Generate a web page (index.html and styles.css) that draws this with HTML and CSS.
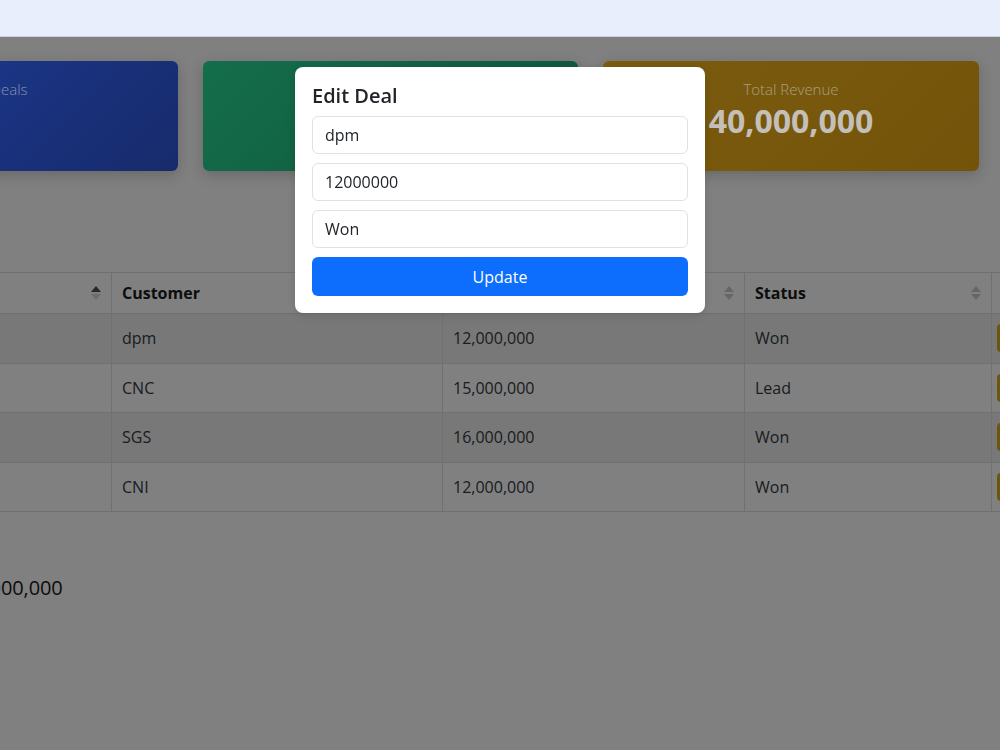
FILE: index.html
```html
<!DOCTYPE html>
<html>
  <head>
    <title>Deals Dashboard</title>
    <link rel="stylesheet" href="styles.css">
  </head>
  <body>
    <header class="topbar"></header>

    <main class="page">
      <section class="stats">
        <div class="stat stat-blue">
          <p class="stat-label">Total Deals</p>
          <p class="stat-value">4</p>
        </div>
        <div class="stat stat-green">
          <p class="stat-label">Won Deals</p>
          <p class="stat-value">3</p>
        </div>
        <div class="stat stat-gold">
          <p class="stat-label">Total Revenue</p>
          <p class="stat-value">40,000,000</p>
        </div>
      </section>

      <table class="deals">
        <colgroup>
          <col class="col-id">
          <col class="col-customer">
          <col class="col-value">
          <col class="col-status">
          <col class="col-actions">
        </colgroup>
        <thead>
          <tr>
            <th class="sortable asc">ID</th>
            <th class="sortable">Customer</th>
            <th class="sortable">Value</th>
            <th class="sortable">Status</th>
            <th>Actions</th>
          </tr>
        </thead>
        <tbody>
          <tr>
            <td>1</td>
            <td>dpm</td>
            <td>12,000,000</td>
            <td>Won</td>
            <td class="actions"><button class="btn-edit">Edit</button></td>
          </tr>
          <tr>
            <td>2</td>
            <td>CNC</td>
            <td>15,000,000</td>
            <td>Lead</td>
            <td class="actions"><button class="btn-edit">Edit</button></td>
          </tr>
          <tr>
            <td>3</td>
            <td>SGS</td>
            <td>16,000,000</td>
            <td>Won</td>
            <td class="actions"><button class="btn-edit">Edit</button></td>
          </tr>
          <tr>
            <td>4</td>
            <td>CNI</td>
            <td>12,000,000</td>
            <td>Won</td>
            <td class="actions"><button class="btn-edit">Edit</button></td>
          </tr>
        </tbody>
      </table>

      <h4 class="summary">Total Deal Value: 55,000,000</h4>
    </main>

    <div class="backdrop"></div>

    <div class="modal-wrap">
      <form class="modal">
        <h5 class="modal-title">Edit Deal</h5>
        <input class="field" type="text" value="dpm" autofocus>
        <input class="field" type="text" value="12000000">
        <input class="field" type="text" value="Won">
        <button type="button" class="btn-primary">Update</button>
      </form>
    </div>
  </body>
</html>
```

FILE: styles.css
```css
:root {
  --page: #a0a0a0;
  --line: #8c8c8c;
  --stripe: #969696;
  --text: #212529;
  --primary: #0d6efd;
  --input-border: #dee2e6;
  --radius: 6px;
}

* {
  box-sizing: border-box;
}

html,
body {
  margin: 0;
  height: 100%;
  overflow: hidden;
}

body {
  font-family: "Segoe UI", "Open Sans", sans-serif;
  font-size: 16px;
  line-height: 1.5;
  color: var(--text);
  background-color: var(--page);
}

.topbar {
  position: relative;
  z-index: 20;
  height: 37px;
  background-color: #e8eefb;
  border-bottom: 1px solid #cfd2dc;
}

/* page is wider than the window, scrolled to the right */
.page {
  width: 1340px;
  margin-left: -197px;
  padding-top: 24px;
}

.stats {
  display: grid;
  grid-template-columns: 375px 375px 376px;
  column-gap: 25px;
}

.stat {
  height: 110px;
  padding: 16px 20px;
  border-radius: var(--radius);
  text-align: center;
  box-shadow: 0 4px 14px rgba(0, 0, 0, 0.18);
}

.stat p {
  margin: 0;
}

.stat-label {
  font-size: 15px;
  font-weight: 300;
  line-height: 24px;
  color: rgba(255, 255, 255, 0.6);
}

.stat-value {
  margin-top: 12px;
  font-size: 32px;
  font-weight: 700;
  line-height: 40px;
  color: rgba(255, 255, 255, 0.92);
}

.stat-blue {
  background: linear-gradient(135deg, #264bbc, #1d3687);
}

.stat-green {
  background: linear-gradient(135deg, #198a5e, #136a4b);
}

.stat-gold {
  background: linear-gradient(135deg, #9c7313, #8f690c);
}

.deals {
  margin-top: 101px;
  width: 1318px;
  table-layout: fixed;
  border-collapse: collapse;
  border: 1px solid var(--line);
}

.col-id { width: 308px; }
.col-customer { width: 331px; }
.col-value { width: 302px; }
.col-status { width: 247px; }
.col-actions { width: 130px; }

.deals th,
.deals td {
  border: 1px solid var(--line);
  text-align: left;
  color: #111;
}

.deals th {
  padding: 8px 10px;
  font-weight: 700;
  line-height: 24px;
}

.deals td {
  padding: 12px 10px;
  line-height: 24.5px;
  color: var(--text);
}

.deals tbody tr:nth-child(odd) td {
  background-color: var(--stripe);
}

.sortable {
  background-image: url("data:image/svg+xml;utf8,<svg xmlns='http://www.w3.org/2000/svg' width='10' height='16'><polygon points='5,1 10,7 0,7' fill='%23000' fill-opacity='0.2'/><polygon points='0,9 10,9 5,15' fill='%23000' fill-opacity='0.2'/></svg>");
  background-repeat: no-repeat;
  background-position: right 10px center;
}

.sortable.asc {
  background-image: url("data:image/svg+xml;utf8,<svg xmlns='http://www.w3.org/2000/svg' width='10' height='16'><polygon points='5,1 10,7 0,7' fill='%23333'/><polygon points='0,9 10,9 5,15' fill='%23000' fill-opacity='0.15'/></svg>");
}

.deals td.actions {
  padding-top: 10px;
  padding-bottom: 10px;
  padding-left: 5px;
}

.btn-edit {
  display: block;
  height: 28px;
  font: inherit;
  font-size: 14px;
  line-height: 28px;
  padding: 0 10px;
  border: none;
  border-radius: 4px;
  background-color: #8a6a10;
  color: #111;
}

.summary {
  margin: 64px 0 0;
  font-size: 20px;
  font-weight: 500;
  line-height: 24px;
  letter-spacing: -0.1px;
  color: #111;
}

.backdrop {
  position: fixed;
  inset: 0;
  z-index: 10;
  background-color: rgba(0, 0, 0, 0.2);
}

.modal-wrap {
  position: fixed;
  inset: 0;
  z-index: 30;
  display: flex;
  justify-content: center;
  align-items: flex-start;
  padding-top: 67px;
}

.modal {
  width: 410px;
  padding: 17px;
  display: flex;
  flex-direction: column;
  gap: 9px;
  background-color: #fff;
  border-radius: 8px;
  box-shadow: 0 2px 10px rgba(0, 0, 0, 0.12);
}

.modal-title {
  margin: 0 0 -1px;
  font-size: 20px;
  font-weight: 600;
  line-height: 24px;
  color: var(--text);
}

.field {
  height: 38px;
  padding: 6px 12px;
  font: inherit;
  color: var(--text);
  border: 1px solid var(--input-border);
  border-radius: var(--radius);
  background-color: #fff;
  caret-color: #000;
}

.field:focus {
  outline: none;
}

.btn-primary {
  height: 39px;
  font: inherit;
  color: #fff;
  background-color: var(--primary);
  border: none;
  border-radius: var(--radius);
  cursor: pointer;
}
```
